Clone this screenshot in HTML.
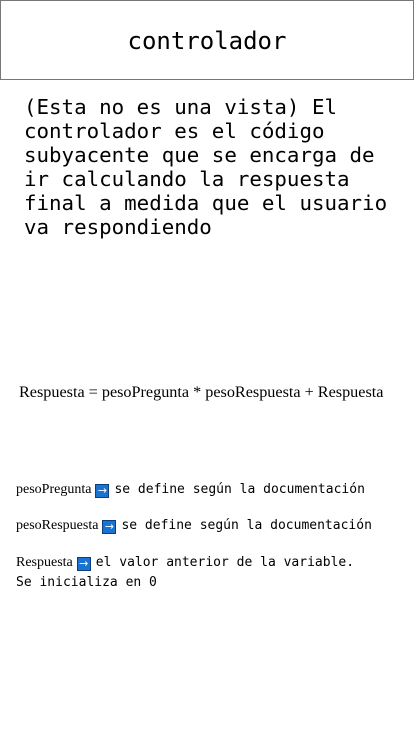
<!DOCTYPE html>
<html><head><meta charset="utf-8"><style>
body{margin:0;width:414px;height:736px;background:#fff;position:relative;overflow:hidden;color:#000}
.hdr{position:absolute;left:0;top:0;width:412px;height:78px;border:1px solid #777;font:24px "DejaVu Sans Mono",monospace;text-align:center;line-height:80px}
.desc{position:absolute;left:24px;top:95px;width:380px;font:20.8px/24px "DejaVu Sans Mono",monospace;white-space:pre}
.f{position:absolute;left:19px;top:383px;font:16.2px "Liberation Serif",serif;white-space:nowrap}
.l{position:absolute;left:16px;font:13px "DejaVu Sans Mono",monospace;white-space:pre;line-height:20px}
.s{font:14px "Liberation Serif",serif}
.i{display:inline-block;width:14px;height:14px;background:#1a73d1;border:1px solid #0c3d80;box-sizing:border-box;vertical-align:-1px;color:#fff;font:11px/11px "DejaVu Sans",sans-serif;text-align:center;margin:0 5px 0 4px}
</style></head><body>
<div class="hdr">controlador</div>
<div class="desc">(Esta no es una vista) El
controlador es el código
subyacente que se encarga de
ir calculando la respuesta
final a medida que el usuario
va respondiendo</div>
<div class="f">Respuesta = pesoPregunta * pesoRespuesta + Respuesta</div>
<div class="l" style="top:480px"><span class="s">pesoPregunta</span><span class="i">→</span>se define según la documentación</div>
<div class="l" style="top:516px"><span class="s">pesoRespuesta</span><span class="i">→</span>se define según la documentación</div>
<div class="l" style="top:553px"><span class="s">Respuesta</span><span class="i">→</span>el valor anterior de la variable.
Se inicializa en 0</div>
</body></html>
